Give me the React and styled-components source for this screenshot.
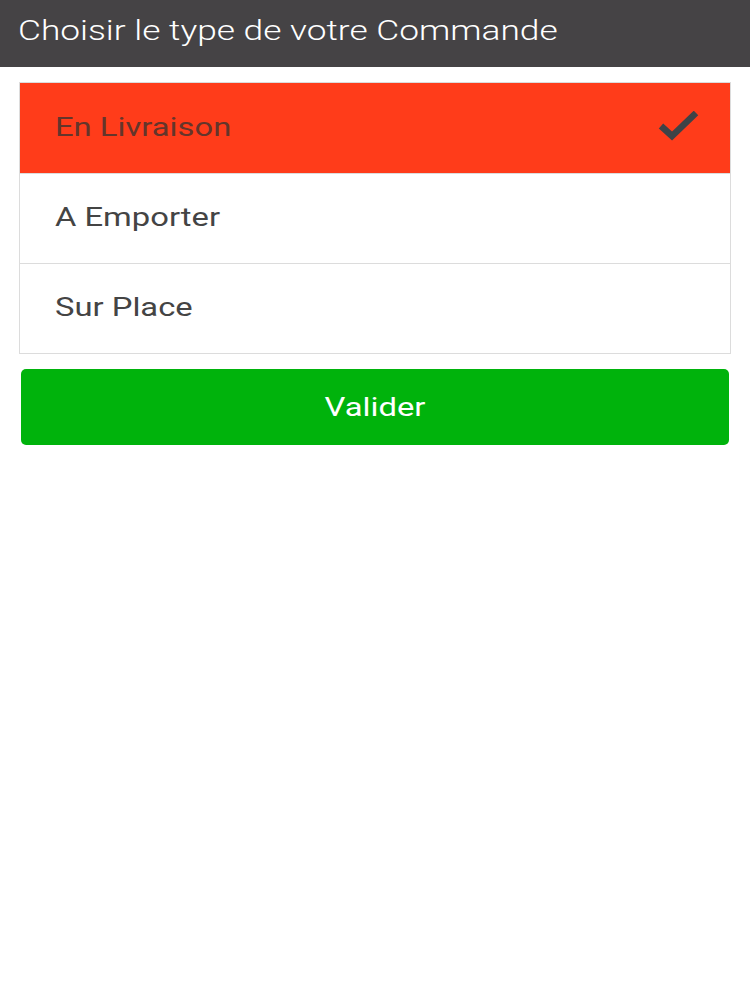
import React, { useState } from 'react'
import styled, { createGlobalStyle } from 'styled-components'

const GlobalStyle = createGlobalStyle`
  body {
    margin: 0;
    background: #fff;
    font-family: Roboto, "Liberation Sans", sans-serif;
  }
`

// the screen text is a bit wider than plain Roboto, so it is stretched a little
const Wide = styled.span`
  display: inline-block;
  transform: scaleX(1.26);
  transform-origin: ${(p) => (p.$center ? 'center' : 'left center')};
`

const Header = styled.div`
  height: 67px;
  background-color: #454345;
  display: flex;
  align-items: center;
  padding: 0 18px;
  box-sizing: border-box;

  h1 {
    margin: 0 0 7px;
    color: #fff;
    font-size: 28px;
    font-weight: 300;
  }
`

const Content = styled.div`
  padding: 15px 19px;
  display: flex;
  flex-direction: column;
  gap: 15px;
`

const List = styled.div`
  border: 1px solid #dcdcdc;
  display: flex;
  flex-direction: column;
`

const Row = styled.div`
  height: 90px;
  display: flex;
  align-items: center;
  justify-content: space-between;
  padding: 0 30px 0 35px;
  box-sizing: border-box;
  background-color: ${(p) => (p.$selected ? '#ff3c1a' : '#fff')};
  border-top: ${(p) => (p.$first ? 'none' : '1px solid #dcdcdc')};
  cursor: pointer;

  span {
    font-size: 26px;
    color: ${(p) => (p.$selected ? '#64352b' : '#444')};
    margin-top: -3px;
  }
`

const Check = () => (
  <svg width="42" height="34" viewBox="0 0 42 34">
    <path d="M3 15 L14 25 L38 2" fill="none" stroke="#3e4347" strokeWidth="6.5" />
  </svg>
)

const Button = styled.button`
  margin: 0 2px;
  height: 76px;
  border: none;
  border-radius: 5px;
  background-color: #00b30c;
  color: #fff;
  font-family: Roboto, "Liberation Sans", sans-serif;
  font-size: 26px;
  cursor: pointer;
`

const options = ['En Livraison', 'A Emporter', 'Sur Place']

const App = () => {
  const [selected, setSelected] = useState(0)

  return (
    <>
      <GlobalStyle />
      <Header>
        <h1><Wide>Choisir le type de votre Commande</Wide></h1>
      </Header>
      <Content>
        <List>
          {options.map((opt, i) => (
            <Row key={opt} $first={i === 0} $selected={selected === i} onClick={() => setSelected(i)}>
              <Wide>{opt}</Wide>
              {selected === i && <Check />}
            </Row>
          ))}
        </List>
        <Button><Wide $center>Valider</Wide></Button>
      </Content>
    </>
  )
}

export default App
